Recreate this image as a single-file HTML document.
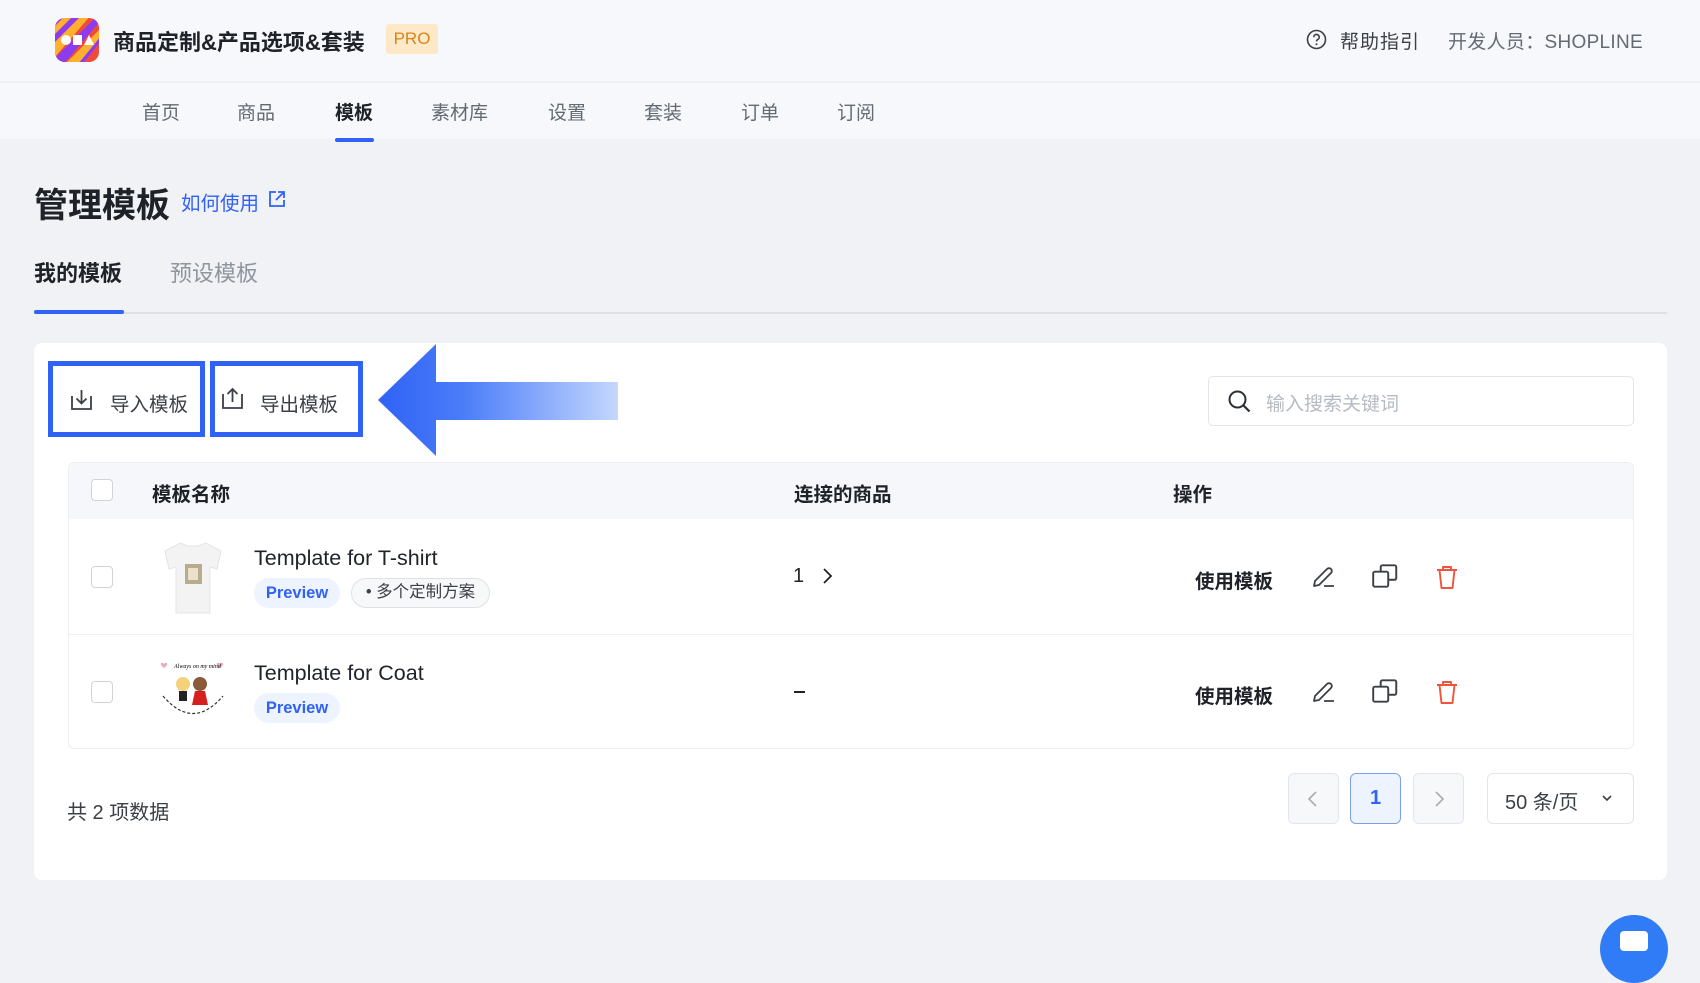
<!DOCTYPE html>
<html><head><meta charset="utf-8">
<style>
*{box-sizing:border-box;margin:0;padding:0}
body{width:1700px;height:942px;overflow:hidden;background:#f0f2f5;font-family:"Liberation Sans","Noto Sans CJK SC",sans-serif;color:#1f2329;position:relative}
.abs{position:absolute}
.hdr{left:0;top:0;width:1700px;height:82px;background:#f7f8fb;border-bottom:1px solid #eceef2}
.nav{left:0;top:83px;width:1700px;height:56px;background:#f7f8fb}
.nav span{position:absolute;top:15px;font-size:19px;color:#646a73}
.t{white-space:nowrap}
.card{left:34px;top:343px;width:1633px;height:537px;background:#fff;border-radius:8px}
.btnbox{border:5px solid #2f62f5;background:#fff}
.cb{width:22px;height:22px;border:1.5px solid #d0d3da;border-radius:4px;background:#fff}
.pill{height:30px;border-radius:15px;font-size:16.5px;line-height:30px;text-align:center}
.pg{width:51px;height:51px;border:1.5px solid #e3e5ea;border-radius:6px;background:#f7f8fa}
</style></head><body>
<div class="abs hdr"></div>
<svg class="abs" style="left:55px;top:18px" width="44" height="44" viewBox="0 0 44 44">
<defs><clipPath id="c"><rect width="44" height="44" rx="10"/></clipPath></defs>
<g clip-path="url(#c)">
<rect width="44" height="44" fill="#f04a3a"/>
<path d="M-10 10L10-10h8L-10 18z M-10 26L26-10h8L-10 34z M-6 46L46-6v8L2 54z M10 50L50 10v8L18 58z" fill="#8b3cf0"/>
<path d="M-10 18L18-10h8L-10 26z M-10 34L34-10h8L-6 46z M2 54L46 10v8L10 62z" fill="#ffb02e"/>
<circle cx="11" cy="22" r="5" fill="#fff"/><rect x="18" y="17" width="9" height="10" fill="#fff"/><path d="M29 27l5-10 5 10z" fill="#fff"/>
</g></svg>
<div class="abs t" style="left:113px;top:25px;font-size:22px;font-weight:bold;color:#1f2329">商品定制&amp;产品选项&amp;套装</div>
<div class="abs" style="left:386px;top:24px;width:52px;height:30px;background:#fde9c8;border-radius:3px;color:#d4861a;font-size:17px;line-height:30px;text-align:center">PRO</div>
<svg class="abs" style="left:1306px;top:29px" width="21" height="21" viewBox="0 0 21 21"><circle cx="10.5" cy="10.5" r="9" fill="none" stroke="#3b3f46" stroke-width="1.6"/><path d="M7.8 8.2a2.7 2.7 0 1 1 3.8 2.4c-.8.4-1.1.9-1.1 1.8" fill="none" stroke="#3b3f46" stroke-width="1.6"/><circle cx="10.5" cy="15.2" r="1" fill="#3b3f46"/></svg>
<div class="abs t" style="left:1340px;top:27px;font-size:19px;color:#3b3f46;letter-spacing:1px">帮助指引</div>
<div class="abs t" style="left:1448px;top:27px;font-size:19px;color:#646a73;letter-spacing:.3px">开发人员：SHOPLINE</div>

<div class="abs nav">
<span style="left:142px">首页</span><span style="left:237px">商品</span><span style="left:335px;color:#1f2329;font-weight:bold">模板</span><span style="left:431px">素材库</span><span style="left:548px">设置</span><span style="left:644px">套装</span><span style="left:741px">订单</span><span style="left:837px">订阅</span>
</div>
<div class="abs" style="left:335px;top:138px;width:39px;height:4px;background:#2f62f5;border-radius:2px"></div>

<div class="abs t" style="left:34px;top:178px;font-size:34px;font-weight:bold;color:#1f2329">管理模板</div>
<div class="abs t" style="left:181px;top:187px;font-size:19.5px;color:#2f62f5">如何使用</div>
<svg class="abs" style="left:268px;top:190px" width="18" height="18" viewBox="0 0 18 18"><path d="M8 2H2v14h14v-6M10 2h6v6M16 2L8 10" fill="none" stroke="#2f62f5" stroke-width="1.8"/></svg>

<div class="abs t" style="left:34px;top:256px;font-size:22px;font-weight:bold;color:#1f2329">我的模板</div>
<div class="abs t" style="left:170px;top:256px;font-size:22px;color:#8f959e">预设模板</div>
<div class="abs" style="left:34px;top:312px;width:1633px;height:1.5px;background:#dfe1e6"></div>
<div class="abs" style="left:34px;top:310px;width:90px;height:4px;background:#2f62f5;border-radius:2px"></div>

<div class="abs card"></div>
<div class="abs btnbox" style="left:48px;top:361px;width:157px;height:76px"></div>
<div class="abs btnbox" style="left:210px;top:361px;width:153px;height:76px"></div>
<svg class="abs" style="left:69px;top:388px" width="25" height="24" viewBox="0 0 25 24"><path d="M3 8v13h19V8M12.5 2v13M7.5 10.5l5 5 5-5" fill="none" stroke="#3b3f46" stroke-width="1.8"/></svg>
<div class="abs t" style="left:110px;top:388px;font-size:19.5px;color:#3b3f46">导入模板</div>
<svg class="abs" style="left:220px;top:386px" width="25" height="24" viewBox="0 0 25 24"><path d="M3 8v14h19V8M12.5 16V3M7.5 8l5-5 5 5" fill="none" stroke="#3b3f46" stroke-width="1.8"/></svg>
<div class="abs t" style="left:260px;top:388px;font-size:19.5px;color:#3b3f46">导出模板</div>
<svg class="abs" style="left:378px;top:344px" width="240" height="112" viewBox="0 0 240 112">
<defs><linearGradient id="g" x1="0" x2="1"><stop offset="0" stop-color="#2f62f5"/><stop offset=".35" stop-color="#4a7cf8"/><stop offset="1" stop-color="#c4d7fd"/></linearGradient></defs>
<path d="M0 56L58 0V38H240V76H58V112Z" fill="url(#g)"/></svg>

<div class="abs" style="left:1208px;top:376px;width:426px;height:50px;border:1.5px solid #e3e5ea;border-radius:5px;background:#fff"></div>
<svg class="abs" style="left:1227px;top:389px" width="26" height="26" viewBox="0 0 26 26"><circle cx="10.5" cy="10.5" r="8" fill="none" stroke="#2b2f36" stroke-width="2"/><path d="M16.5 16.5l6 6" stroke="#2b2f36" stroke-width="2.2"/></svg>
<div class="abs t" style="left:1266px;top:389px;font-size:19px;color:#b6bac2">输入搜索关键词</div>

<div class="abs" style="left:68px;top:462px;width:1566px;height:287px;border:1.5px solid #eceef2;border-radius:6px;background:#fff"></div>
<div class="abs" style="left:69px;top:463px;width:1564px;height:56px;background:#f5f7fb;border-radius:6px 6px 0 0"></div>
<div class="abs" style="left:69px;top:634px;width:1564px;height:1px;background:#eef0f3"></div>
<div class="abs cb" style="left:91px;top:479px"></div>
<div class="abs t" style="left:152px;top:478px;font-size:19.5px;font-weight:bold">模板名称</div>
<div class="abs t" style="left:794px;top:478px;font-size:19.5px;font-weight:bold">连接的商品</div>
<div class="abs t" style="left:1173px;top:478px;font-size:19.5px;font-weight:bold">操作</div>

<!-- row1 -->
<div class="abs cb" style="left:91px;top:566px"></div>
<svg class="abs" style="left:158px;top:540px" width="70" height="76" viewBox="0 0 70 76"><path d="M22 3l8 3h10l8-3 15 8-4 18-7-2v46H18V27l-7 2-4-18z" fill="#f3f3f3" stroke="#e4e4e4"/><rect x="27" y="24" width="17" height="20" fill="#b8ab8e"/><rect x="30" y="28" width="10" height="12" fill="#e9e1cc"/></svg>
<div class="abs t" style="left:254px;top:546px;font-size:21.5px;color:#1f2329">Template for T-shirt</div>
<div class="abs pill" style="left:254px;top:578px;width:86px;background:#edf3ff;color:#2f62f5;font-weight:bold">Preview</div>
<div class="abs pill" style="left:351px;top:578px;width:139px;background:#f7f8fa;border:1.5px solid #dfe1e6;color:#3b3f46;line-height:27px">• 多个定制方案</div>
<div class="abs t" style="left:793px;top:565px;font-size:20px">1</div>
<svg class="abs" style="left:820px;top:567px" width="14" height="18" viewBox="0 0 14 18"><path d="M4 2l7 7-7 7" fill="none" stroke="#1f2329" stroke-width="1.8"/></svg>

<!-- row2 -->
<div class="abs cb" style="left:91px;top:681px"></div>
<svg class="abs" style="left:158px;top:656px" width="70" height="68" viewBox="0 0 70 68"><path d="M6 8c2-3 6 0 0 4-6-4-2-7 0-4zM62 8c2-3 6 0 0 4-6-4-2-7 0-4z" fill="#f0a8c8"/><text x="16" y="12" font-size="6" font-family="Liberation Serif" font-style="italic">Always on my mind</text><circle cx="25" cy="28" r="7" fill="#f3d27a"/><circle cx="42" cy="28" r="7" fill="#8a5a3a"/><rect x="21" y="35" width="8" height="10" fill="#222"/><path d="M37 35h10l3 14H34z" fill="#d62020"/><path d="M5 40q30 35 60 0" fill="none" stroke="#333" stroke-width="1.2" stroke-dasharray="3 2"/></svg>
<div class="abs t" style="left:254px;top:661px;font-size:21.5px;color:#1f2329">Template for Coat</div>
<div class="abs pill" style="left:254px;top:693px;width:86px;background:#edf3ff;color:#2f62f5;font-weight:bold">Preview</div>
<div class="abs" style="left:794px;top:691px;width:11px;height:2px;background:#1f2329"></div>

<!-- actions -->
<div class="abs t" style="left:1195px;top:565px;font-size:19.5px;font-weight:bold">使用模板</div>
<div class="abs t" style="left:1195px;top:680px;font-size:19.5px;font-weight:bold">使用模板</div>
<svg class="abs" style="left:1311px;top:564px" width="26" height="26" viewBox="0 0 26 26"><path d="M3 22l1-5L16 5a2.5 2.5 0 0 1 4 4L8 21zM13 22h10" fill="none" stroke="#3b3f46" stroke-width="1.8" stroke-linejoin="round"/></svg>
<svg class="abs" style="left:1370px;top:561px" width="30" height="30" viewBox="0 0 28 28"><rect x="3" y="10" width="14" height="14" rx="1.5" fill="none" stroke="#3b3f46" stroke-width="1.8"/><path d="M10 10V5.5C10 4.7 10.7 4 11.5 4H23c.8 0 1.5.7 1.5 1.5V16c0 .8-.7 1.5-1.5 1.5H17" fill="none" stroke="#3b3f46" stroke-width="1.8"/></svg>
<svg class="abs" style="left:1434px;top:563px" width="26" height="28" viewBox="0 0 26 28"><path d="M3 7h20M9 7V4h8v3M5.5 7l2 18h11l2-18" fill="none" stroke="#f0553b" stroke-width="1.9" stroke-linejoin="round"/></svg>
<svg class="abs" style="left:1311px;top:679px" width="26" height="26" viewBox="0 0 26 26"><path d="M3 22l1-5L16 5a2.5 2.5 0 0 1 4 4L8 21zM13 22h10" fill="none" stroke="#3b3f46" stroke-width="1.8" stroke-linejoin="round"/></svg>
<svg class="abs" style="left:1370px;top:676px" width="30" height="30" viewBox="0 0 28 28"><rect x="3" y="10" width="14" height="14" rx="1.5" fill="none" stroke="#3b3f46" stroke-width="1.8"/><path d="M10 10V5.5C10 4.7 10.7 4 11.5 4H23c.8 0 1.5.7 1.5 1.5V16c0 .8-.7 1.5-1.5 1.5H17" fill="none" stroke="#3b3f46" stroke-width="1.8"/></svg>
<svg class="abs" style="left:1434px;top:678px" width="26" height="28" viewBox="0 0 26 28"><path d="M3 7h20M9 7V4h8v3M5.5 7l2 18h11l2-18" fill="none" stroke="#f0553b" stroke-width="1.9" stroke-linejoin="round"/></svg>

<!-- footer -->
<div class="abs t" style="left:67px;top:796px;font-size:20px;color:#3b3f46">共 2 项数据</div>
<div class="abs pg" style="left:1288px;top:773px"></div>
<svg class="abs" style="left:1306px;top:790px" width="14" height="18" viewBox="0 0 14 18"><path d="M10 2L3 9l7 7" fill="none" stroke="#a8acb3" stroke-width="1.6"/></svg>
<div class="abs pg" style="left:1350px;top:773px;background:#edf3ff;border-color:#7d9ef0;color:#2f62f5;font-size:20px;font-weight:bold;text-align:center;line-height:48px">1</div>
<div class="abs pg" style="left:1413px;top:773px"></div>
<svg class="abs" style="left:1432px;top:790px" width="14" height="18" viewBox="0 0 14 18"><path d="M4 2l7 7-7 7" fill="none" stroke="#a8acb3" stroke-width="1.6"/></svg>
<div class="abs" style="left:1487px;top:773px;width:147px;height:51px;border:1.5px solid #e3e5ea;border-radius:6px;background:#fff"></div>
<div class="abs t" style="left:1505px;top:786px;font-size:20px;color:#3b3f46">50 条/页</div>
<svg class="abs" style="left:1600px;top:791px" width="14" height="14" viewBox="0 0 14 14"><path d="M3 5l4 4 4-4" fill="none" stroke="#3b3f46" stroke-width="1.6"/></svg>

<div class="abs" style="left:1600px;top:915px;width:68px;height:68px;border-radius:50%;background:#2f7cf6"></div>
<div class="abs" style="left:1620px;top:931px;width:28px;height:20px;border-radius:4px;background:#fff"></div>
</body></html>
